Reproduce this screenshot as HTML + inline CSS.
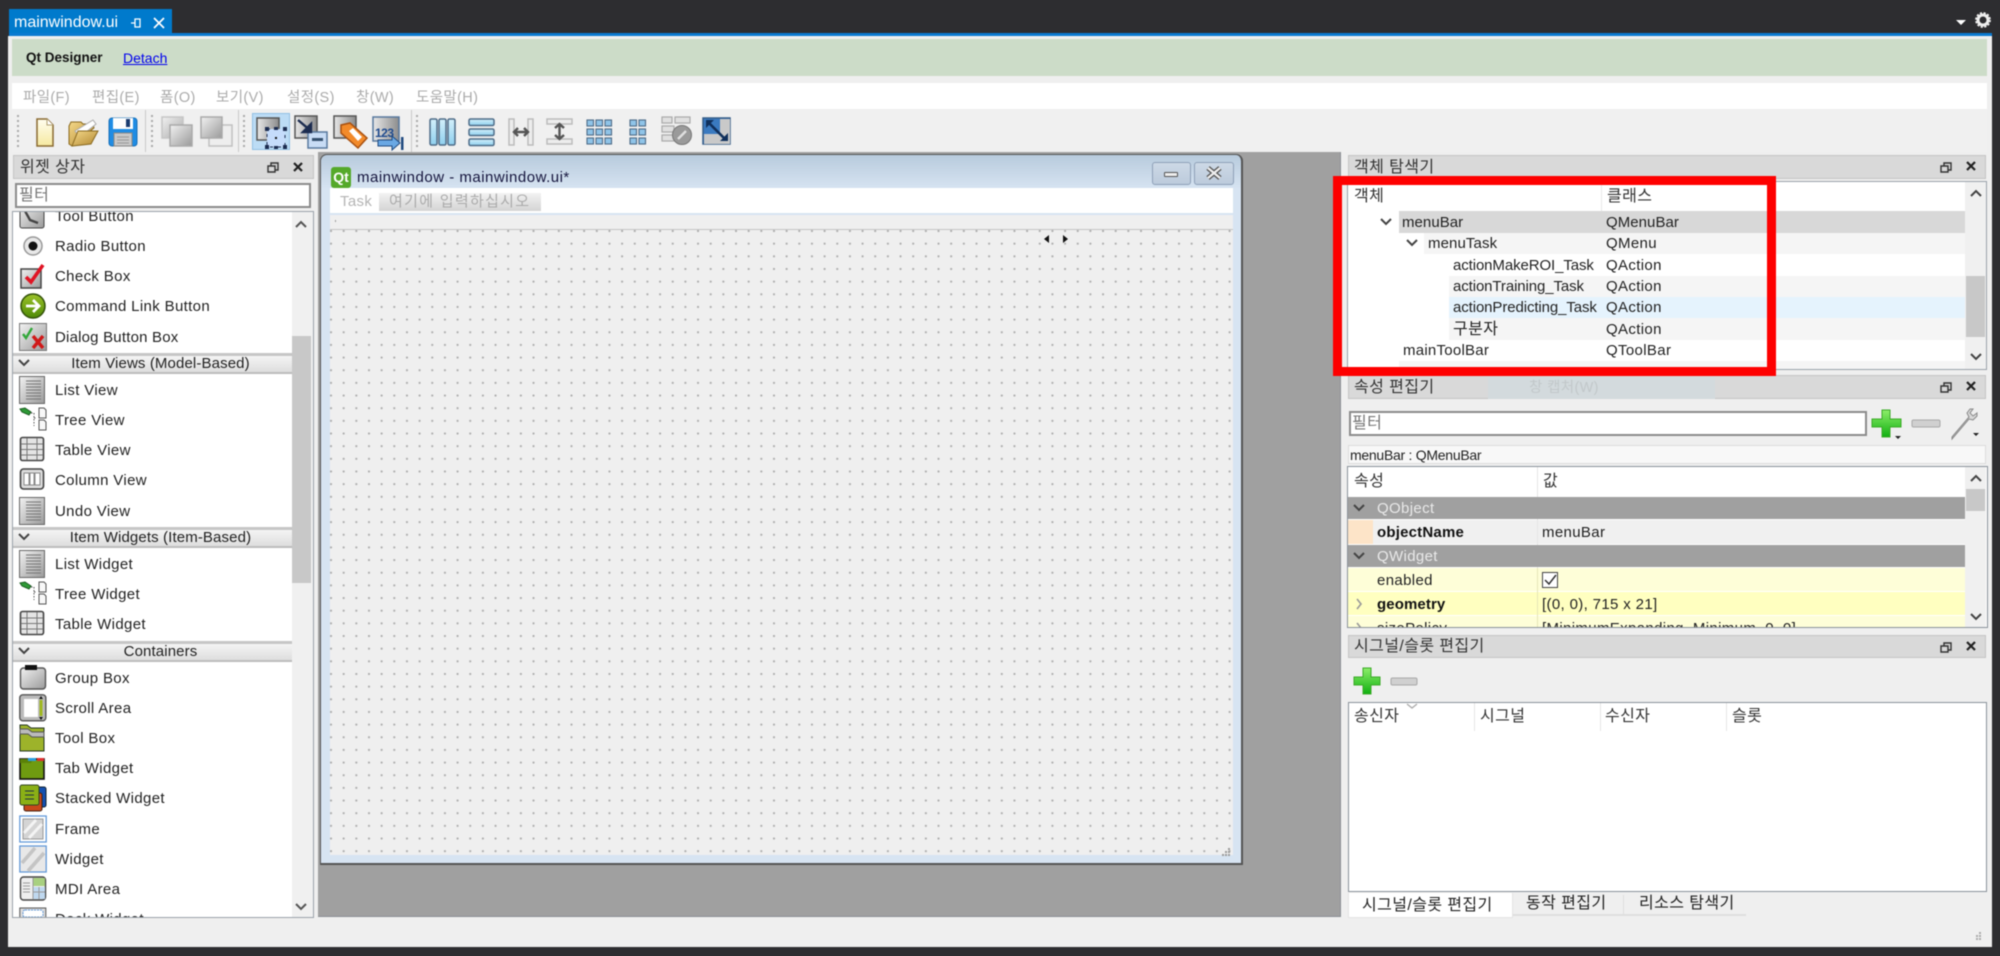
<!DOCTYPE html>
<html lang="ko"><head><meta charset="utf-8"><title>Qt Designer</title>
<style>
html,body{margin:0;padding:0;width:2000px;height:956px;overflow:hidden;background:#2d2d30}
#r{position:absolute;left:0;top:0;width:2000px;height:956px;overflow:hidden;filter:blur(.45px);font-family:"Liberation Sans","Noto Sans CJK KR",sans-serif;font-size:15px;color:#222;letter-spacing:.35px}
#r div{position:absolute}
.t{position:absolute;white-space:nowrap;line-height:20px;height:20px;margin-top:1px}
.k{letter-spacing:.4px;color:#333;font-size:16px}
.m{color:#ababab;font-size:14.5px}
.clip{overflow:hidden}
.in{left:0;top:0;width:2000px;height:956px}
.bar{background:#d9d9d9;border:1px solid #c4c4c4;box-sizing:border-box}
.hd{background:linear-gradient(#f4f4f4,#dedede);border-top:3px solid #c6c6c6;border-bottom:2px solid #bdbdbd;box-sizing:border-box;left:13px;width:279px}
.tc{position:absolute;left:21px;width:279px;text-align:center;white-space:nowrap;line-height:20px;letter-spacing:.12px;margin-top:1px}
svg{position:absolute;overflow:visible}
</style></head><body><div id="r">
<!-- frame -->
<div style="left:9px;top:9px;width:163px;height:24px;background:#007acc"></div>
<span class="t" style="left:14px;top:12px;color:#fff;font-size:16px;letter-spacing:0">mainwindow.ui</span>
<div style="left:9px;top:33px;width:1983px;height:3px;background:#0a7ad1"></div>
<div style="left:8px;top:36px;width:1984px;height:911px;background:#efefef"></div>
<div style="left:12px;top:39px;width:1975px;height:37px;background:#ccdcc8"></div>
<span class="t" style="left:26px;top:47px;font-weight:bold;font-size:13.5px;letter-spacing:0;color:#111">Qt Designer</span>
<span class="t" style="left:123px;top:47px;font-size:14px;letter-spacing:0;color:#0000ee;text-decoration:underline">Detach</span>
<div style="left:12px;top:83px;width:1975px;height:26px;background:#fff"></div>
<span class="t m" style="left:23px;top:87px">파일(F)</span>
<span class="t m" style="left:92px;top:87px">편집(E)</span>
<span class="t m" style="left:160px;top:87px">폼(O)</span>
<span class="t m" style="left:216px;top:87px">보기(V)</span>
<span class="t m" style="left:287px;top:87px">설정(S)</span>
<span class="t m" style="left:356px;top:87px">창(W)</span>
<span class="t m" style="left:416px;top:87px">도움말(H)</span>
<!-- toolbar bg -->
<div style="left:12px;top:110px;width:1975px;height:42px;background:#f0f0f0"></div>
<div style="left:145px;top:110px;width:1px;height:42px;background:#c8c8c8"></div>
<div style="left:238px;top:110px;width:1px;height:42px;background:#c8c8c8"></div>
<div style="left:411px;top:110px;width:1px;height:42px;background:#c8c8c8"></div>
<div style="left:252px;top:113px;width:38px;height:37px;background:#bcdcf5;border:1px solid #92c0e4;box-sizing:border-box"></div>

<!-- left dock -->
<div class="bar" style="left:13px;top:155px;width:301px;height:24px"></div>
<span class="t k" style="left:20px;top:157px">위젯 상자</span>
<div style="left:15px;top:183px;width:296px;height:25px;background:#fff;border:2px solid #8c8c8c;box-sizing:border-box"></div>
<span class="t k" style="left:19px;top:185px;color:#777">필터</span>
<div class="clip" style="left:13px;top:212px;width:300px;height:705px;background:#fff;outline:1px solid #9aa2aa">
<div class="in" style="left:-13px;top:-212px">
<div style="left:292px;top:212px;width:21px;height:705px;background:#f0f0f0"></div>
<div style="left:292px;top:336px;width:19px;height:247px;background:#c8c8c8"></div>
<svg style="left:0;top:0" width="330" height="930" fill="none"><path d="M296 227l5-5 5 5M296 904l5 5 5-5" stroke="#555" stroke-width="2"/></svg>
<div class="hd" style="top:353px;height:21px"></div><div class="tc" style="top:353px">Item Views (Model-Based)</div>
<div class="hd" style="top:527px;height:21px"></div><div class="tc" style="top:527px">Item Widgets (Item-Based)</div>
<div class="hd" style="top:641px;height:21px"></div><div class="tc" style="top:641px">Containers</div>
<span class="t" style="left:55px;top:206px">Tool Button</span>
<span class="t" style="left:55px;top:236px">Radio Button</span>
<span class="t" style="left:55px;top:266px">Check Box</span>
<span class="t" style="left:55px;top:296px">Command Link Button</span>
<span class="t" style="left:55px;top:327px;letter-spacing:.2px">Dialog Button Box</span>
<span class="t" style="left:55px;top:380px">List View</span>
<span class="t" style="left:55px;top:410px">Tree View</span>
<span class="t" style="left:55px;top:440px">Table View</span>
<span class="t" style="left:55px;top:470px">Column View</span>
<span class="t" style="left:55px;top:501px">Undo View</span>
<span class="t" style="left:55px;top:554px">List Widget</span>
<span class="t" style="left:55px;top:584px">Tree Widget</span>
<span class="t" style="left:55px;top:614px">Table Widget</span>
<span class="t" style="left:55px;top:668px">Group Box</span>
<span class="t" style="left:55px;top:698px">Scroll Area</span>
<span class="t" style="left:55px;top:728px">Tool Box</span>
<span class="t" style="left:55px;top:758px">Tab Widget</span>
<span class="t" style="left:55px;top:788px">Stacked Widget</span>
<span class="t" style="left:55px;top:819px">Frame</span>
<span class="t" style="left:55px;top:849px">Widget</span>
<span class="t" style="left:55px;top:879px">MDI Area</span>
<span class="t" style="left:55px;top:909px">Dock Widget</span>
<svg style="left:0;top:0" width="330" height="930">
<defs>
<linearGradient id="g" x1="0" y1="0" x2="1" y2="1"><stop offset="0" stop-color="#f2f2f2"/><stop offset="1" stop-color="#9a9a9a"/></linearGradient>
<linearGradient id="gl" x1="0" y1="0" x2="1" y2="0"><stop offset="0" stop-color="#e8e8e8"/><stop offset="1" stop-color="#8c8c8c"/></linearGradient>
<linearGradient id="gr" x1="0" y1="0" x2="0" y2="1"><stop offset="0" stop-color="#9cc32a"/><stop offset="1" stop-color="#4f8a05"/></linearGradient>
<linearGradient id="pl" x1="0" y1="0" x2="0" y2="1"><stop offset="0" stop-color="#8dee6a"/><stop offset="1" stop-color="#10b010"/></linearGradient>
<linearGradient id="bl" x1="0" y1="0" x2="0" y2="1"><stop offset="0" stop-color="#d4f0fb"/><stop offset="1" stop-color="#8fd0ef"/></linearGradient>
<linearGradient id="fo" x1="0" y1="0" x2="1" y2="1"><stop offset="0" stop-color="#f5d98a"/><stop offset="1" stop-color="#b08630"/></linearGradient>
<linearGradient id="dc" x1="0" y1="0" x2="0" y2="1"><stop offset="0" stop-color="#fffef0"/><stop offset="1" stop-color="#f6e9a0"/></linearGradient>
<symbol id="list" viewBox="0 0 28 28"><rect x=".5" y=".5" width="25" height="27" fill="url(#g)" stroke="#666"/><path d="M7 5h15M7 8h15M7 11h15M7 14h15M7 17h15M7 20h15M7 23h15" stroke="#777"/></symbol>
<symbol id="tree" viewBox="0 0 28 28"><path d="M1 3l5-1 6 4-2 3-7-3z" fill="#2e9a36" stroke="#1d5d22"/><path d="M12 7h3M15 7v13M15 12h3" stroke="#555" stroke-dasharray="1.5 1.5" fill="none"/><path d="M20 2h5l2 2v8h-7z M20 14h5l2 2v8h-7z" fill="#f8f8f8" stroke="#555"/></symbol>
<symbol id="table" viewBox="0 0 28 28"><rect x="1.5" y="1.5" width="23" height="23" rx="2" fill="#e4e4e4" stroke="#444" stroke-width="1.6"/><path d="M2 8h22M2 13.500h22M2 19h22M8 2v22M18 2v22" stroke="#777"/></symbol>
<symbol id="col" viewBox="0 0 28 28"><rect x="1.500" y="3" width="23" height="20" rx="3" fill="#ddd" stroke="#444" stroke-width="1.600"/><path d="M5 7h5v12H5zM11 7h4v12h-4zM16 7h5v12h-5z" fill="#fff" stroke="#888"/></symbol>
<symbol id="radio" viewBox="0 0 28 28"><circle cx="14" cy="14" r="9" fill="#e8e8e8" stroke="#999" stroke-width="1.500"/><circle cx="14" cy="14" r="4.500" fill="#111"/></symbol>
<symbol id="check" viewBox="0 0 28 28"><rect x="2" y="7" width="20" height="19" fill="url(#g)" stroke="#444" stroke-width="1.500"/><path d="M7 15l5 5L24 3" fill="none" stroke="#e01424" stroke-width="3.600"/></symbol>
<symbol id="cmd" viewBox="0 0 28 28"><circle cx="14" cy="14" r="12" fill="url(#gr)" stroke="#33520a" stroke-width="1.500"/><path d="M7 14h13M14 8l6 6-6 6" fill="none" stroke="#fff" stroke-width="2.800"/></symbol>
<symbol id="dlg" viewBox="0 0 28 28"><rect x=".5" y=".5" width="27" height="27" fill="url(#g)" stroke="#777"/><path d="M4 11l3 4 6-10" fill="none" stroke="#32a83a" stroke-width="2.400"/><path d="M14 13l10 12M24 13L14 25" stroke="#d01818" stroke-width="3.400"/></symbol>
<symbol id="grp" viewBox="0 0 28 28"><rect x="1.500" y="4" width="25" height="21" rx="3" fill="url(#g)" stroke="#555" stroke-width="1.400"/><rect x="6" y="1" width="12" height="5" fill="#111"/></symbol>
<symbol id="scr" viewBox="0 0 28 28"><rect x=".8" y=".8" width="26" height="26" rx="3" fill="#bbb" stroke="#555" stroke-width="1.400"/><rect x="5" y="5" width="14" height="18" fill="#fff"/><rect x="20.500" y="6" width="3" height="16" fill="#a0b820"/><path d="M22 2l2 3h-4zM22 26l2-3h-4z" fill="#111"/></symbol>
<symbol id="tbx" viewBox="0 0 28 28"><path d="M1 1h7l4 3h13v23H1z" fill="#9db32a" stroke="#232"/><path d="M1 5h8l4 3h12v5H13L9 10H1z" fill="#bbb" stroke="#555"/></symbol>
<symbol id="tab" viewBox="0 0 28 28"><rect x="1" y="5" width="24" height="20" fill="#6f9b10" stroke="#111" stroke-width="1.600"/><path d="M1 9h11l2-4h-13z" fill="#5b8208"/><rect x="9" y="4" width="8" height="3" fill="#2a9ee0"/><rect x="18" y="4" width="7" height="3" fill="#e03030"/></symbol>
<symbol id="stk" viewBox="0 0 28 28"><rect x="13" y="3" width="14" height="20" rx="2" fill="#1450b0" stroke="#123"/><rect x="5" y="9" width="18" height="18" rx="2" fill="#c8481a" stroke="#421"/><rect x="1" y="1" width="19" height="20" rx="2" fill="#8bb015" stroke="#342"/><path d="M6 7h9M6 11h9M6 15h9" stroke="#234"/></symbol>
<symbol id="frm" viewBox="0 0 28 28"><rect x=".8" y="1" width="26.400" height="26" fill="#fff" stroke="#5b94d6" stroke-width="1.200"/><rect x="4" y="4" width="20" height="20" fill="#d4d4d4" stroke="#999"/><path d="M5 18L17 5M10 23L23 9" stroke="#f4f4f4" stroke-width="3"/></symbol>
<symbol id="wdg" viewBox="0 0 28 28"><rect x=".8" y="1" width="26.400" height="26" fill="#e8e8e8" stroke="#5b94d6" stroke-width="1.200"/><path d="M3 18L16 3M9 26L25 8" stroke="#c4c4c4" stroke-width="3.600"/></symbol>
<symbol id="mdi" viewBox="0 0 28 28"><rect x="1.500" y="2" width="25" height="23" rx="3" fill="#eee" stroke="#444" stroke-width="1.400"/><rect x="14" y="3" width="12" height="8" fill="#a8d080"/><rect x="14" y="12" width="12" height="12" fill="#bfd8ef"/><path d="M14 3v21M14 17h12M20 12v12M4 8h7M4 11h7M4 14h7M4 17h7" stroke="#999"/></symbol>
<symbol id="tbn" viewBox="0 0 28 28"><rect x="1" y="0" width="24" height="24" rx="2" fill="url(#g)" stroke="#444"/><path d="M6 7l5 9 8 3" fill="none" stroke="#444" stroke-width="2.400"/></symbol>
<symbol id="dck" viewBox="0 0 28 28"><rect x=".8" y="1" width="26" height="26" fill="#ddd" stroke="#555"/><rect x="4" y="3" width="20" height="7" rx="2" fill="#fff" stroke="#5b94d6" stroke-dasharray="2 1"/></symbol>
</defs>
<use href="#tbn" x="19" y="204" width="28" height="28"/>
<use href="#radio" x="19" y="232" width="28" height="28"/>
<use href="#check" x="19" y="262" width="28" height="28"/>
<use href="#cmd" x="19" y="292" width="28" height="28"/>
<use href="#dlg" x="19" y="323" width="28" height="28"/>
<use href="#list" x="19" y="376" width="28" height="28"/>
<use href="#tree" x="19" y="406" width="28" height="28"/>
<use href="#table" x="19" y="436" width="28" height="28"/>
<use href="#col" x="19" y="466" width="28" height="28"/>
<use href="#list" x="19" y="497" width="28" height="28"/>
<use href="#list" x="19" y="550" width="28" height="28"/>
<use href="#tree" x="19" y="580" width="28" height="28"/>
<use href="#table" x="19" y="610" width="28" height="28"/>
<use href="#grp" x="19" y="664" width="28" height="28"/>
<use href="#scr" x="19" y="694" width="28" height="28"/>
<use href="#tbx" x="19" y="724" width="28" height="28"/>
<use href="#tab" x="19" y="754" width="28" height="28"/>
<use href="#stk" x="19" y="784" width="28" height="28"/>
<use href="#frm" x="19" y="815" width="28" height="28"/>
<use href="#wdg" x="19" y="845" width="28" height="28"/>
<use href="#mdi" x="19" y="875" width="28" height="28"/>
<use href="#dck" x="19" y="907" width="28" height="28"/>
<path d="M19 360l5 5 5-5M19 534l5 5 5-5M19 648l5 5 5-5" fill="none" stroke="#444" stroke-width="2"/>
</svg>
</div></div>

<!-- MDI -->
<div style="left:318px;top:152px;width:1023px;height:765px;background:#a0a0a0;border-right:1px solid #8a8f94;border-bottom:1px solid #8a8f94;box-sizing:border-box"></div>
<div style="left:320px;top:154px;width:923px;height:711px;background:linear-gradient(#b8cbdd 0,#d7e4f2 34px);border:1px solid #555;border-right-width:2px;border-bottom-width:2px;border-radius:7px 7px 0 0;box-sizing:border-box"></div>
<div style="left:331px;top:167px;width:20px;height:21px;background:#55a92a;border-radius:3px;color:#fff;font-weight:bold;font-size:14px;letter-spacing:0;line-height:20px;text-align:center">Qt</div>
<span class="t" style="left:357px;top:167px;color:#14143c;letter-spacing:.5px;font-size:15px">mainwindow - mainwindow.ui*</span>
<div style="left:1152px;top:162px;width:39px;height:23px;background:linear-gradient(#cdd9e6,#bccbdc);border:1px solid #8ea0b8;border-radius:3px;box-sizing:border-box"></div>
<div style="left:1194px;top:162px;width:40px;height:23px;background:linear-gradient(#cdd9e6,#bccbdc);border:1px solid #8ea0b8;border-radius:3px;box-sizing:border-box"></div>
<div style="left:1164px;top:172px;width:14px;height:5px;background:#eee;border:1px solid #555;border-radius:1px;box-sizing:border-box"></div>
<svg style="left:0;top:0" width="1300" height="250"><path d="M1208 168l12 10M1220 168l-12 10" stroke="#555" stroke-width="5"/><path d="M1208 168l12 10M1220 168l-12 10" stroke="#eee" stroke-width="2.400"/></svg>
<div style="left:330px;top:188px;width:903px;height:25px;background:#fff"></div>
<span class="t" style="left:340px;top:191px;color:#b4b4b4;font-size:15px">Task</span>
<div style="left:379px;top:193px;width:162px;height:18px;background:linear-gradient(#f2f2f2,#d4d4d4)"></div>
<span class="t" style="left:389px;top:191px;color:#aaa;font-size:15px;letter-spacing:1.300px">여기에 입력하십시오</span>
<div style="left:330px;top:215px;width:903px;height:640px;background-color:#efefef"></div>
<div style="left:330px;top:229px;width:903px;height:1px;background:#c4c4c4"></div>
<div style="left:330px;top:230px;width:903px;height:625px;background-image:radial-gradient(circle at 1px 1px,#adadad 0,#adadad .9px,transparent 1.300px);background-size:12.670px 12.670px"></div>
<svg style="left:0;top:0" width="1300" height="880"><path d="M335 221h1M1228 849h2M1225 852h2M1228 852h2M1222 855h2M1225 855h2M1228 855h2" stroke="#9a9a9a" stroke-width="2"/><path d="M1049 235v8l-5-4zM1063 235v8l5-4z" fill="#111"/></svg>

<!-- object inspector -->
<div class="bar" style="left:1348px;top:155px;width:638px;height:24px"></div>
<span class="t k" style="left:1354px;top:157px">객체 탐색기</span>
<div class="clip" style="left:1348px;top:182px;width:638px;height:187px;background:#fff;outline:1px solid #9aa2aa">
<div class="in" style="left:-1348px;top:-182px">
<div style="left:1601px;top:182px;width:1px;height:29px;background:#e8e8e8"></div>
<span class="t k" style="left:1354px;top:186px">객체</span>
<span class="t k" style="left:1607px;top:186px">클래스</span>
<div style="left:1399px;top:211px;width:566px;height:22px;background:#d8d8d8"></div>
<div style="left:1424px;top:233px;width:541px;height:21px;background:#f5f5f5"></div>
<div style="left:1449px;top:276px;width:516px;height:21px;background:#f5f5f5"></div>
<div style="left:1449px;top:297px;width:516px;height:21px;background:#e5f3fd"></div>
<div style="left:1449px;top:318px;width:516px;height:22px;background:#f5f5f5"></div>
<div style="left:1399px;top:361px;width:566px;height:21px;background:#f5f5f5"></div>
<span class="t" style="left:1402px;top:212px;letter-spacing:.05px">menuBar</span><span class="t" style="left:1606px;top:212px;letter-spacing:.05px">QMenuBar</span>
<span class="t" style="left:1428px;top:233px;letter-spacing:.1px">menuTask</span><span class="t" style="left:1606px;top:233px">QMenu</span>
<span class="t" style="left:1453px;top:255px;letter-spacing:-.1px">actionMakeROI_Task</span><span class="t" style="left:1606px;top:255px">QAction</span>
<span class="t" style="left:1453px;top:276px;letter-spacing:-.1px">actionTraining_Task</span><span class="t" style="left:1606px;top:276px">QAction</span>
<span class="t" style="left:1453px;top:297px;letter-spacing:-.1px">actionPredicting_Task</span><span class="t" style="left:1606px;top:297px">QAction</span>
<span class="t k" style="left:1453px;top:319px;color:#222">구분자</span><span class="t" style="left:1606px;top:319px">QAction</span>
<span class="t" style="left:1403px;top:340px;letter-spacing:.25px">mainToolBar</span><span class="t" style="left:1606px;top:340px">QToolBar</span>
<span class="t" style="left:1403px;top:362px">statusBar</span><span class="t" style="left:1606px;top:362px">QStatusBar</span>
<div style="left:1965px;top:182px;width:21px;height:187px;background:#f0f0f0"></div>
<div style="left:1966px;top:276px;width:19px;height:61px;background:#c8c8c8"></div>
<svg style="left:0;top:0" width="2000" height="400" fill="none"><path d="M1971 196l5-5 5 5M1971 354l5 5 5-5M1381 219l5 5 5-5M1407 240l5 5 5-5" stroke="#444" stroke-width="2"/></svg>
</div></div>

<!-- property editor -->
<div class="bar" style="left:1348px;top:375px;width:638px;height:24px"></div>
<div style="left:1488px;top:377px;width:227px;height:22px;background:#d3dadd"></div>
<span class="t" style="left:1529px;top:377px;color:#c2c8ca;font-size:14.500px">창 캡처(W)</span>
<span class="t k" style="left:1354px;top:377px">속성 편집기</span>
<div style="left:1349px;top:411px;width:518px;height:25px;background:#fff;border:2px solid #8c8c8c;box-sizing:border-box"></div>
<span class="t k" style="left:1352px;top:413px;color:#777">필터</span>
<div style="left:1348px;top:445px;width:638px;height:19px;background:#f8f8f8;border:1px solid #dcdcdc;box-sizing:border-box"></div>
<span class="t" style="left:1350px;top:444px;color:#222;font-size:14px;letter-spacing:-.27px">menuBar : QMenuBar</span>
<div class="clip" style="left:1348px;top:467px;width:639px;height:160px;background:#fff;outline:1px solid #8a929a">
<div class="in" style="left:-1348px;top:-467px">
<div style="left:1537px;top:467px;width:1px;height:160px;background:#e6e6e6"></div>
<span class="t k" style="left:1354px;top:471px">속성</span>
<span class="t k" style="left:1543px;top:471px">값</span>
<div style="left:1348px;top:497px;width:617px;height:22px;background:#a0a0a0"></div>
<div style="left:1348px;top:520px;width:617px;height:24px;background:#f0f0f0"></div>
<div style="left:1348px;top:520px;width:25px;height:24px;background:#fde4c8"></div>
<div style="left:1348px;top:545px;width:617px;height:22px;background:#a0a0a0"></div>
<div style="left:1348px;top:568px;width:617px;height:23px;background:#fefed8"></div>
<div style="left:1348px;top:592px;width:617px;height:23px;background:#ffffc0"></div>
<div style="left:1348px;top:616px;width:617px;height:24px;background:#fefed8"></div>
<div style="left:1537px;top:520px;width:1px;height:24px;background:#e6e6e6"></div>
<div style="left:1537px;top:568px;width:1px;height:72px;background:#e6e6b8"></div>
<span class="t" style="left:1377px;top:498px;color:#e9e9e9">QObject</span>
<span class="t" style="left:1377px;top:522px;font-weight:bold;color:#111;letter-spacing:.2px">objectName</span>
<span class="t" style="left:1542px;top:522px">menuBar</span>
<span class="t" style="left:1377px;top:546px;color:#e9e9e9">QWidget</span>
<span class="t" style="left:1377px;top:570px">enabled</span>
<span class="t" style="left:1377px;top:594px;font-weight:bold;color:#111;letter-spacing:.1px">geometry</span>
<span class="t" style="left:1542px;top:594px">[(0, 0), 715 x 21]</span>
<span class="t" style="left:1377px;top:618px">sizePolicy</span>
<span class="t" style="left:1542px;top:618px">[MinimumExpanding, Minimum, 0, 0]</span>
<div style="left:1542px;top:572px;width:16px;height:16px;background:#fff;border:1px solid #444;box-sizing:border-box"></div>
<div style="left:1965px;top:467px;width:21px;height:160px;background:#f0f0f0"></div>
<div style="left:1966px;top:489px;width:19px;height:22px;background:#c8c8c8"></div>
<svg style="left:0;top:0" width="2000" height="640" fill="none"><path d="M1545 580l4 4 7-9" stroke="#333" stroke-width="1.500"/><path d="M1971 481l5-5 5 5M1971 614l5 5 5-5M1354 505l5 5 5-5M1354 553l5 5 5-5" stroke="#444" stroke-width="2"/><path d="M1357 599l4 5-4 5M1357 623l4 5-4 5" stroke="#999" stroke-width="1.600"/></svg>
</div></div>

<!-- signal/slot -->
<div class="bar" style="left:1348px;top:635px;width:638px;height:23px"></div>
<span class="t k" style="left:1354px;top:636px">시그널/슬롯 편집기</span>
<div style="left:1348px;top:702px;width:639px;height:190px;background:#fff;border:1px solid #8a929a;box-sizing:border-box"></div>
<div style="left:1474px;top:703px;width:1px;height:28px;background:#e6e6e6"></div>
<div style="left:1600px;top:703px;width:1px;height:28px;background:#e6e6e6"></div>
<div style="left:1726px;top:703px;width:1px;height:28px;background:#e6e6e6"></div>
<span class="t k" style="left:1354px;top:706px">송신자</span>
<span class="t k" style="left:1480px;top:706px">시그널</span>
<span class="t k" style="left:1605px;top:706px">수신자</span>
<span class="t k" style="left:1732px;top:706px">슬롯</span>
<div style="left:1348px;top:893px;width:398px;height:23px;border-bottom:2px solid #dedede;box-sizing:border-box"></div>
<div style="left:1348px;top:893px;width:165px;height:25px;background:#fff;border:1px solid #e4e4e4;border-top:none;box-sizing:border-box"></div>
<div style="left:1623px;top:895px;width:1px;height:20px;background:#dedede"></div>
<span class="t k" style="left:1362px;top:895px;color:#222">시그널/슬롯 편집기</span>
<span class="t k" style="left:1526px;top:893px;color:#222">동작 편집기</span>
<span class="t k" style="left:1639px;top:893px;color:#222">리소스 탐색기</span>

<!-- overlay svg: toolbar and panel icons -->
<svg style="left:0;top:0" width="2000" height="956">
<!-- tab pin + close -->
<path d="M131 23h4M135 19v8h5v-8zM140 21v4" fill="none" stroke="#fff" stroke-width="1.300"/>
<path d="M154 18l10 10M164 18l-10 10" stroke="#fff" stroke-width="1.700"/>
<!-- top right -->
<path d="M1956 20h10l-5 5z" fill="#fff"/>
<circle cx="1983" cy="20" r="5" fill="none" stroke="#eee" stroke-width="3"/>
<circle cx="1983" cy="20" r="7" fill="none" stroke="#eee" stroke-width="1.800" stroke-dasharray="2.200 1.500"/>
<!-- grips -->
<g fill="none" stroke="#aaa" stroke-width="2" stroke-dasharray="2 3"><path d="M18 115v33M152 115v33M244 115v33M417 115v33"/></g>
<!-- new / open / save -->
<path d="M37 119h10l6 6v21H37z" fill="url(#dc)" stroke="#8a6a30" stroke-width="1.500"/>
<path d="M47 119v6h6" fill="#fff" stroke="#b0a070"/>
<path d="M69 126l2-4h10l2 2h10l1 4-22 18-3-2z" fill="url(#fo)" stroke="#8a6a20"/>
<path d="M75 131l18-11 3 4-16 13z" fill="#fff" stroke="#aaa"/>
<path d="M72 146l6-15h20l-7 13z" fill="url(#fo)" stroke="#8a6a20"/>
<rect x="109" y="118" width="28" height="28" rx="3" fill="#1f8ce4" stroke="#1a70b8"/>
<rect x="113" y="118" width="20" height="11" fill="#fdfdfd"/><rect x="126" y="119" width="4" height="8" fill="#1a3c70"/>
<rect x="114" y="133" width="18" height="13" fill="#c8c8c8" stroke="#888"/>
<path d="M117 137h12M117 140h12M117 143h12" stroke="#999"/>
<!-- copy disabled -->
<rect x="162" y="117" width="21" height="21" fill="url(#g)" stroke="#bbb" stroke-width="1.500" opacity=".8"/>
<rect x="170" y="125" width="22" height="21" fill="url(#g)" stroke="#aaa" stroke-width="1.500"/>
<rect x="209" y="125" width="23" height="21" fill="#eee" stroke="#c0c0c0" stroke-width="1.500"/>
<rect x="201" y="117" width="21" height="21" fill="url(#g)" stroke="#aaa" stroke-width="1.500"/>
<!-- edit widgets -->
<rect x="257" y="118" width="22" height="22" fill="url(#gl)" stroke="#555" stroke-width="1.500"/>
<rect x="267" y="129" width="18" height="18" fill="#c5dcfb" stroke="#1c2c50" stroke-dasharray="3 5"/>
<rect x="275" y="137" width="2" height="2" fill="#111"/>
<g fill="#1c2c50"><rect x="265" y="127" width="4" height="4"/><rect x="283" y="127" width="4" height="4"/><rect x="265" y="145" width="4" height="4"/><rect x="283" y="145" width="4" height="4"/><rect x="274" y="127" width="4" height="3"/><rect x="274" y="146" width="4" height="3"/></g>
<!-- signals -->
<rect x="295" y="116" width="22" height="22" fill="url(#gl)" stroke="#555" stroke-width="1.500"/>
<rect x="308" y="132" width="19" height="16" fill="#c8dcf5" stroke="#58799e" stroke-width="1.500"/><rect x="312" y="138" width="11" height="3" fill="#35506e"/>
<path d="M298 120l13 11M311 124v8h-8z" fill="#1c2c50" stroke="#1c2c50" stroke-width="2.400"/>
<!-- buddies -->
<rect x="334" y="116" width="22" height="22" fill="url(#gl)" stroke="#555" stroke-width="1.500"/>
<path d="M341 125l9-2 17 15-9 10-17-15z" fill="#f28a2a" stroke="#a85010" stroke-width="1.500"/>
<path d="M349 131l4-3 9 9-4 4z" fill="#fff"/>
<!-- tab order -->
<rect x="373" y="117" width="26" height="24" fill="url(#gl)" stroke="#58799e" stroke-width="1.500"/>
<text x="375" y="137" font-family="Liberation Sans,sans-serif" font-size="12" font-weight="bold" fill="#1e4a8e" letter-spacing="-.5">123</text>
<path d="M378 140h14v-4l8 7-8 7v-4h-14z" fill="#6aa8e4" stroke="#204a80"/><rect x="401" y="137" width="2.500" height="13" fill="#204a80"/>
<!-- layouts -->
<g fill="url(#bl)" stroke="#4e6c88" stroke-width="1.500">
<rect x="430" y="119" width="7" height="26" rx="1.500"/><rect x="439" y="119" width="7" height="26" rx="1.500"/><rect x="448" y="119" width="7" height="26" rx="1.500"/>
<rect x="469" y="119" width="25" height="6.500" rx="1.500"/><rect x="469" y="129" width="25" height="6.500" rx="1.500"/><rect x="469" y="139" width="25" height="6.500" rx="1.500"/>
</g>
<g fill="#ededed" stroke="#bbb" stroke-width="1.500"><rect x="509" y="119" width="5" height="26"/><rect x="528" y="119" width="5" height="26"/><rect x="547" y="119" width="25" height="5"/><rect x="547" y="139" width="25" height="5"/></g>
<path d="M514 132h14M518 128l-4 4 4 4M524 128l4 4-4 4M559.500 124v15M555 128l4.500-4 4.500 4M555 135l4.500 4 4.500-4" fill="none" stroke="#555" stroke-width="2.400"/>
<g fill="#8fc4e8" stroke="#4e6c88" stroke-width="1.100">
<rect x="587" y="120" width="6.500" height="6"/><rect x="596" y="120" width="6.500" height="6"/><rect x="605" y="120" width="6.500" height="6"/>
<rect x="587" y="129" width="6.500" height="6"/><rect x="596" y="129" width="6.500" height="6"/><rect x="605" y="129" width="6.500" height="6"/>
<rect x="587" y="138" width="6.500" height="6"/><rect x="596" y="138" width="6.500" height="6"/><rect x="605" y="138" width="6.500" height="6"/>
<rect x="630" y="120" width="6.500" height="6"/><rect x="639" y="120" width="6.500" height="6"/>
<rect x="630" y="129" width="6.500" height="6"/><rect x="639" y="129" width="6.500" height="6"/>
<rect x="630" y="138" width="6.500" height="6"/><rect x="639" y="138" width="6.500" height="6"/>
</g>
<g fill="#e0e0e0" stroke="#aaa" stroke-width="1.200"><rect x="662" y="117" width="10" height="6"/><rect x="675" y="117" width="15" height="6"/><rect x="662" y="126" width="12" height="6"/><rect x="662" y="135" width="12" height="6"/></g>
<circle cx="682" cy="135" r="9.500" fill="#9a9a9a" stroke="#777"/><path d="M678 139l8-8" stroke="#e0e0e0" stroke-width="2.400"/>
<rect x="703" y="118" width="27" height="26" fill="#3a7ac0" stroke="#345c88" stroke-width="1.500"/>
<path d="M720 119h10v25h-26v-10h16z" fill="#c9c9c9"/>
<path d="M708 122l17 17" stroke="#10305c" stroke-width="2.600"/><path d="M706 128v-8h8zM728 133v8h-8z" fill="#10305c"/>
<!-- dock float / close buttons -->
<g fill="none" stroke="#333" stroke-width="1.400">
<path d="M268 172v-6h7v6zM271 166v-3h7v7h-3"/><path d="M1941 172v-6h7v6zM1944 166v-3h7v7h-3"/><path d="M1941 392v-6h7v6zM1944 386v-3h7v7h-3"/><path d="M1941 652v-6h7v6zM1944 646v-3h7v7h-3"/>
</g>
<g stroke="#222" stroke-width="2.200"><path d="M294 163l8 8M302 163l-8 8M1967 162l8 8M1975 162l-8 8M1967 382l8 8M1975 382l-8 8M1967 642l8 8M1975 642l-8 8"/></g>
<!-- plus / minus / wrench -->
<path d="M1882 410h8v9h11v8h-11v10h-8v-10h-10v-8h10z" fill="url(#pl)" stroke="#3caa28"/>
<rect x="1912" y="420" width="28" height="7" rx="1.500" fill="#d0d0d0" stroke="#a8a8a8"/>
<path d="M1895 436h6l-3 3zM1973 433h6l-3 3z" fill="#222"/>
<path d="M1952 437l17-20-2-4 3-4h3l-3 4 3 3 4-3v3l-4 4-4-1-17 20z" fill="#d8d8d8" stroke="#888"/>
<path d="M1363 668h8v9h9v8h-9v9h-8v-9h-9v-8h9z" fill="url(#pl)" stroke="#3caa28"/>
<rect x="1391" y="678" width="26" height="7" rx="1.500" fill="#d0d0d0" stroke="#a8a8a8"/>
<path d="M1407 704l5 4 5-4" fill="none" stroke="#aaa" stroke-width="1.300"/>
<path d="M1976 939h2M1979 939h2M1976 936h2M1979 936h2M1979 933h2" stroke="#aaa" stroke-width="2"/>
</svg>

<!-- red highlight -->
<div style="left:1333px;top:176px;width:443px;height:200px;border:9px solid #fe0000;box-sizing:border-box"></div>
</div></body></html>
